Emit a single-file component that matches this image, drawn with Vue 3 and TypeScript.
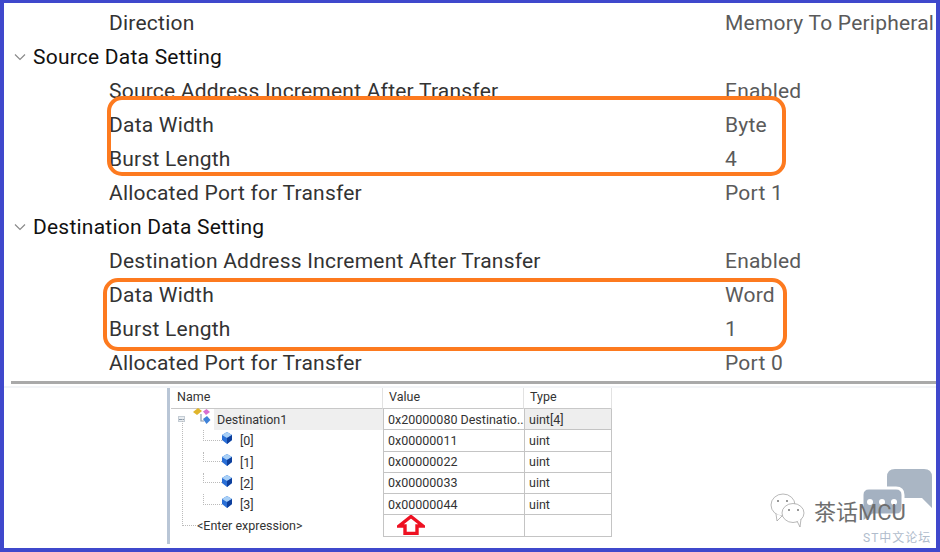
<script setup lang="ts">
type Row = { label: string; value?: string; head?: boolean }

const rows: Row[] = [
  { label: 'Direction', value: 'Memory To Peripheral' },
  { label: 'Source Data Setting', head: true },
  { label: 'Source Address Increment After Transfer', value: 'Enabled' },
  { label: 'Data Width', value: 'Byte' },
  { label: 'Burst Length', value: '4' },
  { label: 'Allocated Port for Transfer', value: 'Port 1' },
  { label: 'Destination Data Setting', head: true },
  { label: 'Destination Address Increment After Transfer', value: 'Enabled' },
  { label: 'Data Width', value: 'Word' },
  { label: 'Burst Length', value: '1' },
  { label: 'Allocated Port for Transfer', value: 'Port 0' },
]

const items = [
  { name: '[0]', value: '0x00000011' },
  { name: '[1]', value: '0x00000022' },
  { name: '[2]', value: '0x00000033' },
  { name: '[3]', value: '0x00000044' },
]
</script>

<template>
  <div class="frame">
    <div class="props">
      <div v-for="(r, i) in rows" :key="i" class="row" :class="{ head: r.head }">
        <svg v-if="r.head" class="chev" width="12" height="8" viewBox="0 0 12 8">
          <path d="M1 1.5 L6 6.5 L11 1.5" fill="none" stroke="#8a8a8a" stroke-width="1.2" />
        </svg>
        <span class="label">{{ r.label }}</span>
        <span v-if="r.value" class="value">{{ r.value }}</span>
      </div>
      <div class="ring ring-a"></div>
      <div class="ring ring-b"></div>
    </div>

    <div class="sep"></div>

    <div class="watch">
      <div class="table">
        <div class="thead name-h">Name</div>
        <div class="thead val-h">Value</div>
        <div class="thead type-h">Type</div>

        <div class="name root">
          <span class="minus"></span>
          <svg class="struct" width="18" height="17" viewBox="0 0 18 17">
            <path d="M0 4 L5 0 L9 3 L4 7 Z" fill="#e0b52c" />
            <path d="M10 3.5 L13.5 1 L17 4 L13 7 Z" fill="#d86fd0" />
            <path d="M8 6 V13 H11" fill="none" stroke="#8a9ab0" stroke-width="1.2" />
            <path d="M10 11 L14 8 L17.5 12 L13.5 16 Z" fill="#3f82d8" />
          </svg>
          <span class="root-text">Destination1</span>
        </div>
        <div class="val">0x20000080 Destinatio...</div>
        <div class="val shaded">uint[4]</div>

        <template v-for="it in items" :key="it.name">
          <div class="name child">
            <span class="branch"></span>
            <svg class="gem" width="10" height="12" viewBox="0 0 10 12">
              <path d="M5 0 L10 3 V8 L5 12 L0 8 V3 Z" fill="#2a6fd6" />
              <path d="M5 0 L10 3 L5 6 L0 3 Z" fill="#a9d0f7" />
              <path d="M5 6 L10 3 V8 L5 12 Z" fill="#0e3f9c" />
            </svg>
            <span>{{ it.name }}</span>
          </div>
          <div class="val">{{ it.value }}</div>
          <div class="val">uint</div>
        </template>

        <div class="name enter">&lt;Enter expression&gt;</div>
        <div class="val arrow-cell">
          <svg width="28" height="20" viewBox="0 0 28 20">
            <path d="M14 1.5 L26 11 H20 V18.5 H8 V11 H2 Z" fill="#fff" stroke="#ee1122" stroke-width="3.4" />
          </svg>
        </div>
        <div class="val"></div>
      </div>
    </div>

    <div class="mark">
      <svg class="bubbles" width="75" height="60" viewBox="0 0 75 60">
        <path d="M28 10 Q28 2 36 2 H65 Q73 2 73 10 V41 L63 31 H28 Z" fill="#aab6c4" />
        <path d="M3 28 Q3 21 10 21 H37 Q44 21 44 28 V41 Q44 48 37 48 H14 L3 56 Z" fill="#a4b1c1" stroke="#fff" stroke-width="3" />
        <circle cx="11" cy="35" r="3" fill="#fff" />
        <circle cx="23" cy="35" r="3" fill="#fff" />
        <circle cx="35" cy="35" r="3" fill="#fff" />
      </svg>
      <svg class="wechat" width="36" height="36" viewBox="0 0 36 36">
        <ellipse cx="13" cy="13" rx="12" ry="11" fill="#fff" stroke="#999" stroke-width="0.7" />
        <path d="M6 22 L7 29 L12 24" fill="#fff" stroke="#999" stroke-width="0.7" />
        <ellipse cx="23" cy="21" rx="11" ry="9.5" fill="#fff" stroke="#999" stroke-width="0.7" />
        <path d="M27 29 L30 35 L31 27" fill="#fff" stroke="#999" stroke-width="0.7" />
        <circle cx="8" cy="9" r="1" fill="#777" />
        <circle cx="17" cy="9" r="1" fill="#777" />
        <circle cx="19" cy="18" r="1" fill="#777" />
        <circle cx="28" cy="18" r="1" fill="#777" />
      </svg>
      <span class="mark-name">茶话MCU</span>
      <span class="mark-sub">ST中文论坛</span>
    </div>
  </div>
</template>

<style>
body {
  margin: 0;
}
</style>

<style scoped>
.frame {
  position: relative;
  width: 940px;
  height: 552px;
  box-sizing: border-box;
  border: solid #3f48cc;
  border-width: 3px 4px 4px 4px;
  background: #fff;
  overflow: hidden;
  font-family: "Roboto", "Noto Sans CJK SC", sans-serif;
}
.props {
  position: relative;
  padding-top: 3px;
}
.row {
  display: flex;
  align-items: center;
  height: 34px;
  padding-left: 105px;
  font-size: 21px;
  letter-spacing: 0.22px;
  color: #333;
  white-space: nowrap;
}
.row.head {
  padding-left: 29px;
  color: #111;
}
.chev {
  position: absolute;
  left: 10px;
}
.label {
  flex: none;
}
.value {
  position: absolute;
  left: 721px;
  color: #5a5a5a;
}
.ring {
  position: absolute;
  box-sizing: border-box;
  border: 4px solid #fd7a1f;
  border-radius: 15px;
}
.ring-a {
  left: 103px;
  top: 93px;
  width: 679px;
  height: 80px;
}
.ring-b {
  left: 99px;
  top: 275px;
  width: 684px;
  height: 73px;
}
.sep {
  height: 3px;
  margin: 1px 0 0 7px;
  background: #a9a9a9;
}
.watch {
  margin-top: 2px;
  height: 161px;
  background: linear-gradient(#f2f4f7 0 2px, #fff 2px);
  padding-left: 163px;
  position: relative;
}
.watch::before {
  content: "";
  position: absolute;
  left: 163px;
  top: 2px;
  bottom: 3px;
  width: 3px;
  background: #b9c6d6;
}
.table {
  display: grid;
  grid-template-columns: 212px 141px 88px;
  grid-template-rows: 21px repeat(6, 21.25px);
  margin-left: 4px;
  padding-top: 2px;
  font-size: 12.5px;
  color: #333;
}
.thead {
  display: flex;
  align-items: center;
  padding: 0 0 4px 6px;
  border-bottom: 1.5px solid #c8c8c8;
  border-right: 1px solid #e2e2e2;
  box-sizing: border-box;
}
.val {
  display: flex;
  align-items: center;
  padding-left: 4px;
  box-sizing: border-box;
  border-left: 1.5px solid #c4c4c4;
  border-bottom: 1.5px solid #c4c4c4;
  white-space: nowrap;
}
.val:nth-child(3n) {
  border-right: 1.5px solid #c4c4c4;
}
.shaded {
  background: #eee;
}
.name {
  position: relative;
  display: flex;
  align-items: center;
}
.root {
  padding-left: 43px;
}
.root-text {
  align-self: stretch;
  display: flex;
  align-items: center;
  flex: 1;
  padding-left: 3px;
  background: #efefef;
}
.minus {
  position: absolute;
  left: 7px;
  top: 7px;
  width: 7px;
  height: 6px;
  background: linear-gradient(#8899aa, #8899aa) center / 5px 1px no-repeat #e8ecf0;
  border: 1px solid #c4ccd4;
  box-sizing: border-box;
}
.struct {
  position: absolute;
  left: 22px;
  top: -1px;
}
.child {
  padding-left: 51px;
  gap: 8px;
}
.gem {
  margin-top: -5px;
}
.branch {
  position: absolute;
  left: 32px;
  top: 0;
  bottom: 50%;
  width: 18px;
  border-left: 1px dotted #bbb;
  border-bottom: 1px dotted #bbb;
}
.enter {
  padding-left: 26px;
}
.enter::before {
  content: "";
  position: absolute;
  left: 11px;
  top: -96px;
  height: 106px;
  width: 13px;
  border-left: 1px dotted #bbb;
  border-bottom: 1px dotted #bbb;
}
.arrow-cell {
  padding-left: 13px;
  overflow: hidden;
}
.mark {
  position: absolute;
  right: 0;
  bottom: 0;
  width: 170px;
  height: 89px;
}
.bubbles {
  position: absolute;
  left: 93px;
  top: 8px;
}
.wechat {
  position: absolute;
  left: 4px;
  top: 33px;
}
.mark-name {
  position: absolute;
  left: 48px;
  top: 35px;
  font-size: 22px;
  color: #6e6e6e;
  white-space: nowrap;
}
.mark-sub {
  position: absolute;
  left: 97px;
  top: 69px;
  font-size: 12px;
  letter-spacing: 1px;
  color: #b0bccc;
  white-space: nowrap;
}
</style>
